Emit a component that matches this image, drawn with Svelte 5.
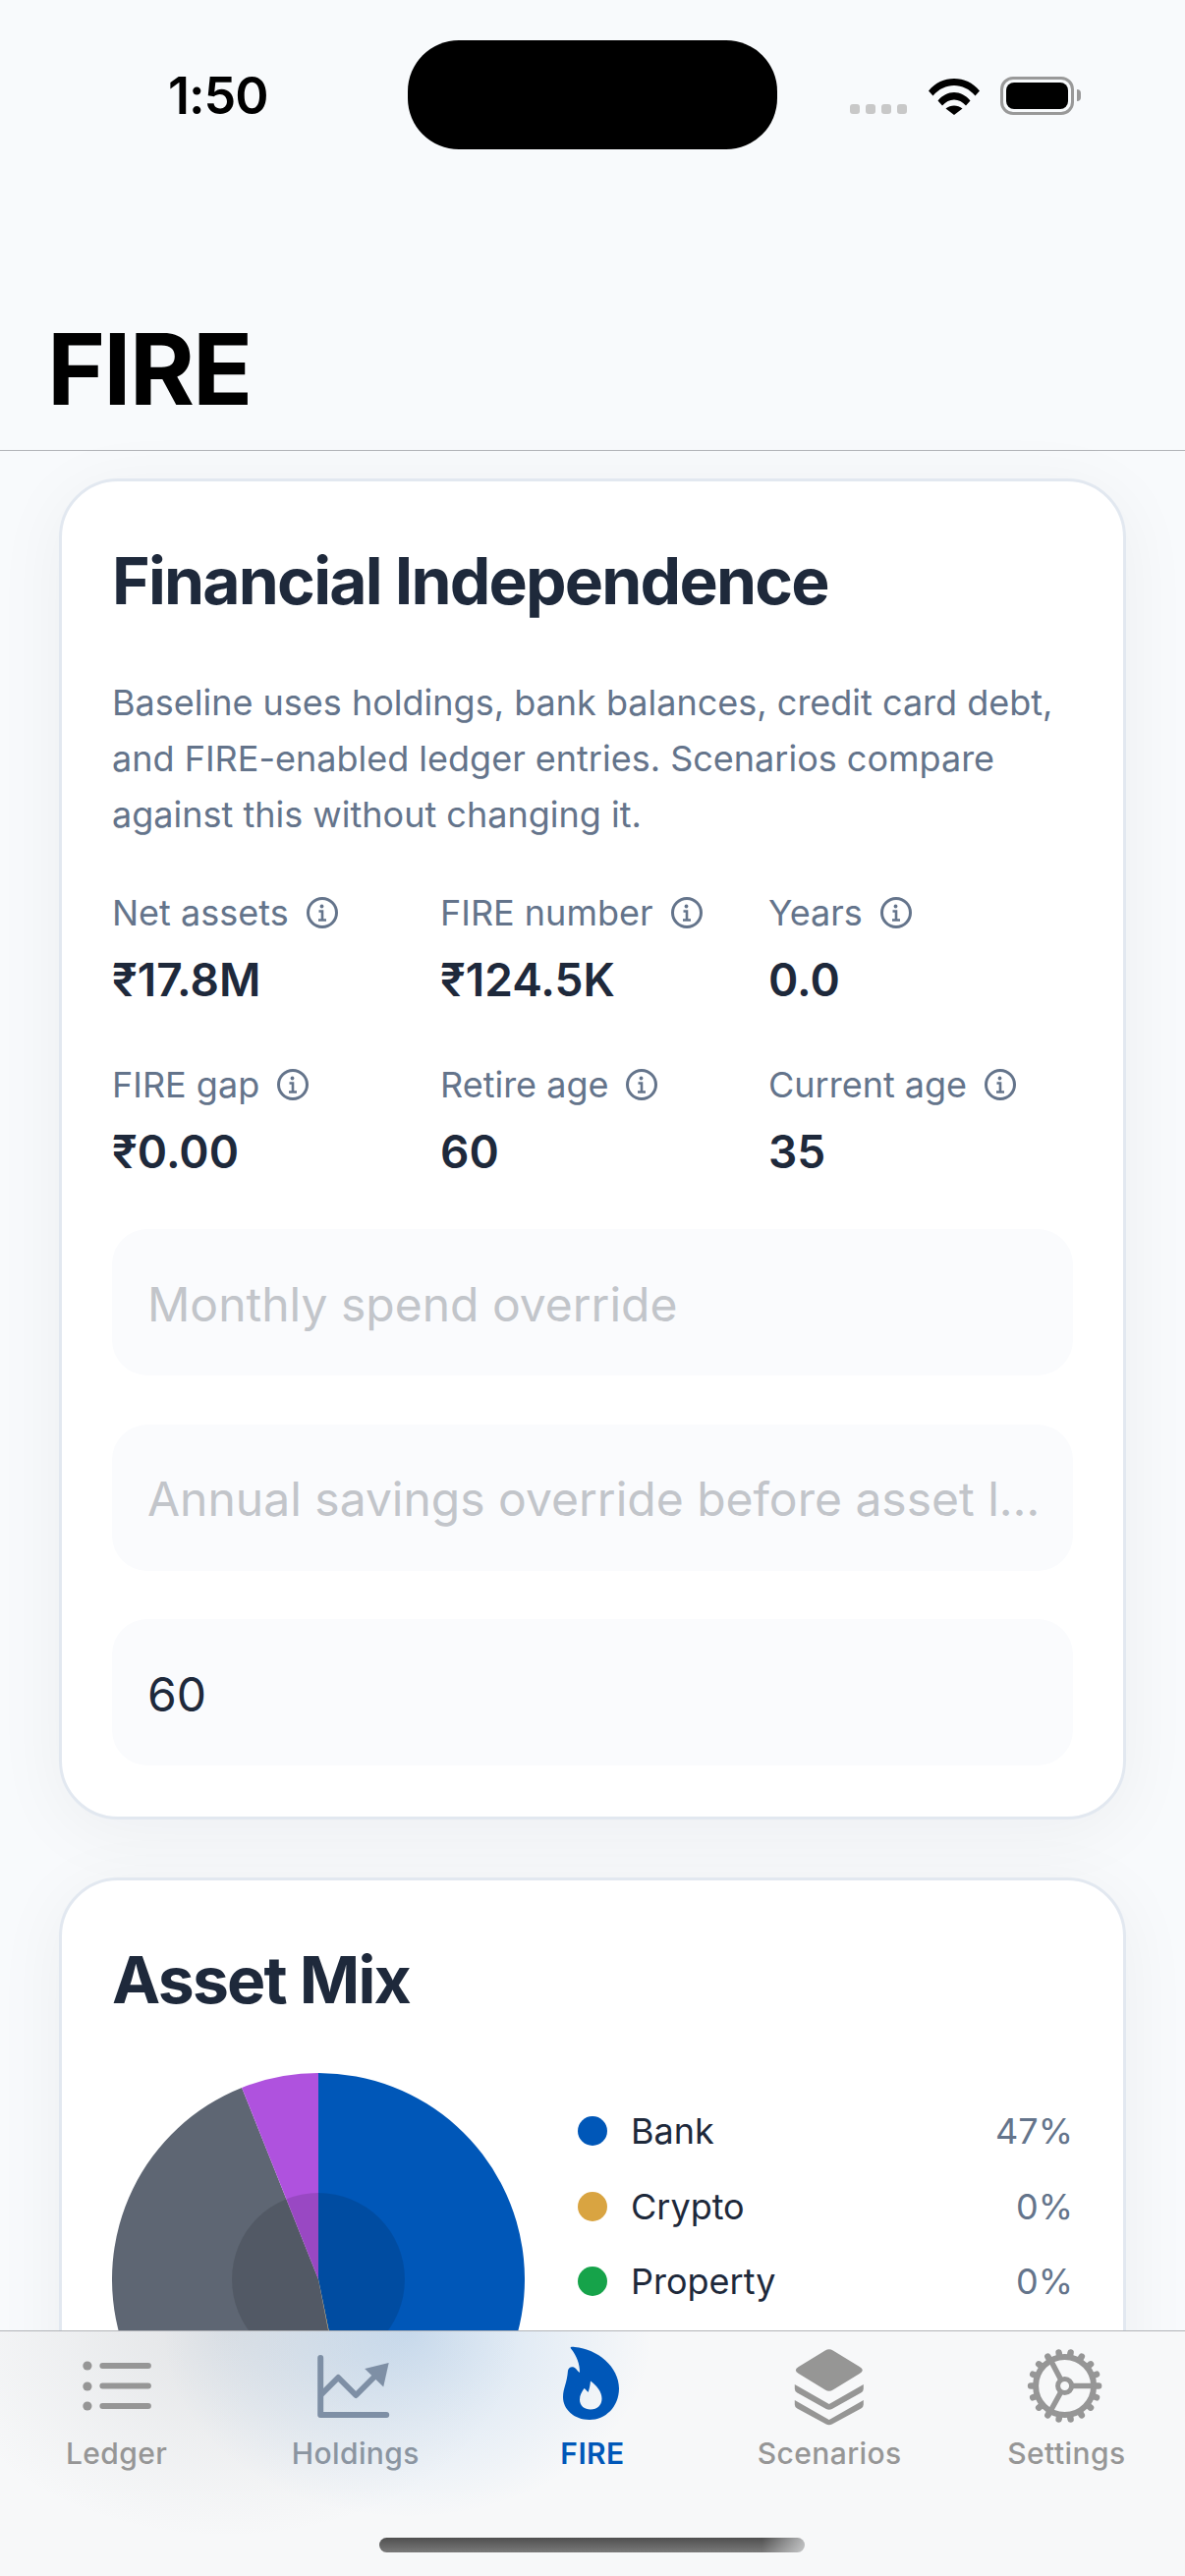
<script>
  const stats = [
    { label: 'Net assets', value: '₹17.8M' },
    { label: 'FIRE number', value: '₹124.5K' },
    { label: 'Years', value: '0.0' },
    { label: 'FIRE gap', value: '₹0.00' },
    { label: 'Retire age', value: '60' },
    { label: 'Current age', value: '35' }
  ];
  const legend = [
    { name: 'Bank', pct: '47%', color: '#0057b8' },
    { name: 'Crypto', pct: '0%', color: '#d9a441' },
    { name: 'Property', pct: '0%', color: '#16a34a' }
  ];
  const slices = [
    { share: 46.8, color: '#0057b8' },
    { share: 0.15, color: '#d9a441' },
    { share: 47, color: '#5e6673' },
    { share: 6.05, color: '#af52de' }
  ];
  function pieSlices() {
    let acc = 0;
    return slices.map((s) => {
      const a0 = (acc / 100) * 2 * Math.PI;
      acc += s.share;
      const a1 = (acc / 100) * 2 * Math.PI;
      const p = (a) => `${210 + 210 * Math.sin(a)} ${210 - 210 * Math.cos(a)}`;
      return { d: `M210 210L${p(a0)}A210 210 0 ${s.share > 50 ? 1 : 0} 1 ${p(a1)}Z`, color: s.color };
    });
  }
  const pie = pieSlices();
  const teeth = Array.from({ length: 18 }, (_, i) => (i * 20 + 10));
</script>

<div class="screen">
  <div class="status">
    <div class="time">1:50</div>
    <div class="island"></div>
    <div class="sys">
      <div class="dots"><i></i><i></i><i></i><i></i></div>
      <svg class="wifi" viewBox="0 0 52 38" width="52" height="38">
        <path d="M0 13.5C7 5 16 1 26 1s19 4 26 12.5l-4.5 5C41.500 11.500 34 8 26 8S10.500 11.500 4.500 18.500Z" fill="#000"/>
        <path d="M9.500 23.500C14 18 20 15 26 15s12 3 16.500 8.500L38 28.500C34.500 24.500 30.500 22.500 26 22.500s-8.500 2-12 6Z" fill="#000"/>
        <path d="M17.500 31.500C20 29.500 23 28.500 26 28.500s6 1 8.500 3L26 38Z" fill="#000"/>
      </svg>
      <div class="battery"><div class="cell"></div><div class="nub"></div></div>
    </div>
  </div>

  <header class="head"><h1>FIRE</h1></header>

  <main class="content">
    <section class="card">
      <h2>Financial Independence</h2>
      <p class="intro">Baseline uses holdings, bank balances, credit card debt, and FIRE-enabled ledger entries. Scenarios compare against this without changing it.</p>
      <div class="stats">
        {#each stats as s}
          <div class="stat">
            <div class="label">
              <span>{s.label}</span>
              <svg viewBox="0 0 34 34" width="34" height="34" fill="none" stroke="#64748b">
                <circle cx="17" cy="17" r="14.500" stroke-width="3"/>
                <circle cx="16.500" cy="10.500" r="1.900" fill="#64748b" stroke="none"/>
                <path d="M13.500 15.500H17V24M13 24.500H21" stroke-width="2.600"/>
              </svg>
            </div>
            <div class="value">{s.value}</div>
          </div>
        {/each}
      </div>
      <div class="fields">
        <input type="text" placeholder="Monthly spend override" />
        <input type="text" placeholder="Annual savings override before asset liquidation" />
        <input type="text" value="60" />
      </div>
    </section>

    <section class="card">
      <h2>Asset Mix</h2>
      <div class="mix">
        <svg class="pie" viewBox="0 0 420 420" width="420" height="420">
          {#each pie as s}
            <path d={s.d} fill={s.color}/>
          {/each}
          <circle cx="210" cy="210" r="88" fill="#000" fill-opacity="0.12"/>
        </svg>
        <div class="legend">
          {#each legend as l}
            <div class="row">
              <span class="dot" style="background:{l.color}"></span>
              <span class="name">{l.name}</span>
              <span class="pct">{l.pct}</span>
            </div>
          {/each}
        </div>
      </div>
    </section>
  </main>

  <nav class="tabs">
    <div class="tab ledger">
      <svg viewBox="78.600 2386 84 84" width="84" height="84" fill="#969696">
        <circle cx="88.500" cy="2408" r="4.600"/><circle cx="88.500" cy="2429" r="4.600"/><circle cx="88.500" cy="2449" r="4.600"/>
        <rect x="101" y="2405" width="52.500" height="6" rx="3"/><rect x="101" y="2425.500" width="52.500" height="6" rx="3"/><rect x="101" y="2446" width="52.500" height="6" rx="3"/>
      </svg>
      <span>Ledger</span>
    </div>
    <div class="tab hold">
      <svg viewBox="319.800 2386 84 84" width="84" height="84" fill="none" stroke="#7e8fa5" stroke-width="6" stroke-linecap="round" stroke-linejoin="round">
        <path d="M326 2400V2458H393"/>
        <path d="M327 2437L344 2420L362 2438L381 2419"/>
        <path d="M395.500 2405L371 2411L390 2429.500Z" fill="#7e8fa5" stroke="none"/>
      </svg>
      <span>Holdings</span>
    </div>
    <div class="tab active">
      <svg viewBox="561 2386 84 84" width="84" height="84">
        <path fill-rule="evenodd" fill="#0057b8" d="M581 2390.500C579.500 2388.800 582 2388.600 585 2389C608 2391 630 2409 630 2431C630 2450 616 2463 600 2463C584 2463 573 2452 573 2440C573 2431 577 2426 578 2413C578.500 2409 583 2408 585.500 2410.500C587.500 2412.500 588 2413.500 590 2415C590 2406 587 2398 581 2390.500ZM601 2423.500C600.500 2428 600 2431 598.500 2435C597 2433 596 2432 594.500 2431C592 2435 590 2438 590 2442.500C590 2449 595 2452.500 601 2452.500C608 2452.500 612.500 2448 612.500 2441.500C612.500 2434 607 2428 601 2423.500Z"/>
      </svg>
      <span>FIRE</span>
    </div>
    <div class="tab">
      <svg viewBox="802.200 2386 84 84" width="84" height="84" fill="#969695">
        <path d="M840 2392.500Q844 2390 848 2392.500L875 2409Q881 2412.500 875 2416L848 2432.500Q844 2435 840 2432.500L813 2416Q807 2412.500 813 2409Z"/>
        <path d="M809 2427L844 2447L879 2427V2431.500Q879 2434 876.500 2435.500L847 2452Q844 2453.500 841 2452L811.500 2435.500Q809 2434 809 2431.500Z"/>
        <path d="M809 2443L844 2463L879 2443V2447.500Q879 2450 876.500 2451.500L847 2467.500Q844 2469 841 2467.500L811.500 2451.500Q809 2450 809 2447.500Z"/>
      </svg>
      <span>Scenarios</span>
    </div>
    <div class="tab">
      <svg viewBox="1043.400 2386 84 84" width="84" height="84" fill="none" stroke="#969696">
        <circle cx="1084" cy="2428.500" r="29.500" stroke-width="6"/>
        {#each teeth as t}
          <line x1="1084" y1="2397" x2="1084" y2="2394" stroke-width="6.500" stroke-linecap="round" transform="rotate({t} 1084 2428.500)"/>
        {/each}
        <circle cx="1084" cy="2428.500" r="7" stroke-width="5"/>
        <path d="M1091 2428.500H1112M1080 2422L1069 2401M1080 2435L1069 2455" stroke-width="5.500"/>
      </svg>
      <span>Settings</span>
    </div>
    <div class="home"></div>
  </nav>
</div>

<style>
  :global(body) { margin: 0; background: #f8fafc; }
  .screen {
    width: 1206px; height: 2622px; overflow: hidden; position: relative;
    background: #f8fafc; font-family: Inter, "Noto Sans", sans-serif; color: #1e293b;
  }
  .status { height: 165px; display: grid; grid-template-columns: 415px 376px 1fr; align-items: start; }
  .time { font-size: 52px; font-weight: 600; color: #000; padding: 66px 0 0 171px; line-height: 64px; letter-spacing: -1px; }
  .island { margin-top: 41px; height: 111px; border-radius: 52px; background: #000; }
  .sys { display: flex; align-items: flex-start; padding: 78px 0 0 74px; }
  .dots { display: flex; gap: 6px; margin-top: 28px; }
  .dots i { width: 10px; height: 10px; border-radius: 3px; background: #c8c8c8; }
  .wifi { margin: 1px 0 0 22px; }
  .battery { position: relative; margin-left: 21px; width: 75px; height: 39px; box-sizing: border-box; border: 3px solid #999; border-radius: 13px; padding: 3px; }
  .cell { background: #000; height: 100%; border-radius: 8px; }
  .nub { position: absolute; right: -10px; top: 10px; width: 4px; height: 12px; background: #999; border-radius: 0 4px 4px 0; }

  .head { height: 294px; box-sizing: border-box; border-bottom: 1px solid #b2b4b8; }
  h1 { margin: 0; padding: 0 0 0 48px; font-size: 101px; line-height: 120px; font-weight: 700; color: #000; letter-spacing: -2px; position: relative; top: 150px; height: 0; }

  .content { padding: 28px 60px 0; display: flex; flex-direction: column; gap: 59px; }
  .card {
    background: #fff; border: 3px solid #e2e8f0; border-radius: 60px; padding: 51px 51px 52px;
    box-shadow: 0 12px 72px rgba(15, 23, 42, 0.05); flex: none;
  }
  h2 { margin: 10px 0 0; font-size: 66px; line-height: 80px; font-weight: 700; color: #1e293b; letter-spacing: -1.8px; }
  .intro { margin: 56px 0 0; font-size: 36px; line-height: 57px; color: #64748b; }
  .stats { display: grid; grid-template-columns: repeat(3, 1fr); column-gap: 24px; row-gap: 53px; margin-top: 44px; }
  .label { display: flex; align-items: center; gap: 17px; font-size: 36px; line-height: 54px; color: #64748b; white-space: nowrap; }
  .value { font-size: 46px; line-height: 54px; font-weight: 600; color: #1e293b; margin-top: 14px; }
  .fields { display: flex; flex-direction: column; gap: 49.500px; margin-top: 52px; }
  input {
    display: block; width: 100%; box-sizing: border-box; height: 149px; border: 0; border-radius: 36px;
    background: #fafbfd; padding: 3px 30px 0 36px; font: 400 48px Inter, sans-serif; color: #1e293b; outline: none;
    text-overflow: ellipsis;
  }
  input::placeholder { color: #c2c5ca; opacity: 1; }

  .mix { display: flex; margin-top: 55px; gap: 54px; }
  .pie { flex: none; display: block; }
  .legend { flex: 1; padding-top: 21px; }
  .row { display: flex; align-items: center; height: 76.500px; font-size: 36px; }
  .dot { width: 30px; height: 30px; border-radius: 50%; margin-right: 24px; flex: none; }
  .name { flex: 1; color: #1e293b; }
  .pct { color: #64748b; }

  .tabs {
    position: absolute; left: 0; right: 0; bottom: 0; height: 250px; box-sizing: border-box;
    border-top: 1px solid #b2b4b8; padding-top: 13px;
    display: grid; grid-template-columns: repeat(5, 1fr); align-content: start;
    background:
      radial-gradient(ellipse 250px 190px at 415px 0, rgba(0, 100, 200, 0.17), rgba(0, 100, 200, 0.08) 50%, rgba(0, 100, 200, 0) 100%),
      radial-gradient(ellipse 300px 210px at 230px 0, rgba(70, 78, 90, 0.12), rgba(70, 78, 90, 0.05) 55%, rgba(70, 78, 90, 0) 100%),
      #f7f8f9;
  }
  .tab { display: flex; flex-direction: column; align-items: center; font-size: 30px; font-weight: 500; color: #969696; letter-spacing: 0.4px; }
  .tab svg { display: block; }
  .tab span { margin-top: 7px; line-height: 40px; }
  .ledger span { margin-right: 4px; }
  .hold { color: #8b95a1; }
  .active { color: #0057b8; font-weight: 600; }
  .home {
    position: absolute; left: 386px; top: 210px; width: 433px; height: 15px; border-radius: 8px;
    background: linear-gradient(90deg, transparent 90%, rgba(248, 250, 252, 0.6)), linear-gradient(180deg, #4f4f4f, #7a7a7a);
  }
</style>
